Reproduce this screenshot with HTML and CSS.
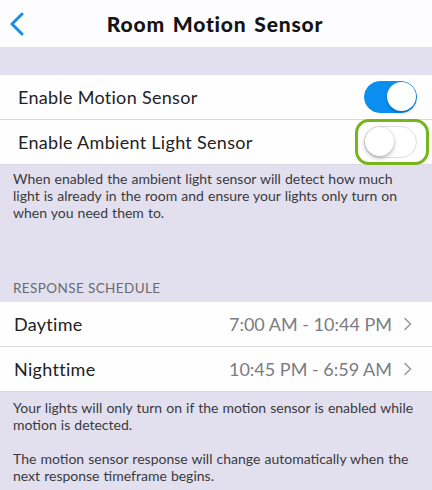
FILE: index.html
```html
<!DOCTYPE html>
<html lang="en">
<head>
<meta charset="utf-8">
<title>Room Motion Sensor</title>
<link rel="stylesheet" href="styles.css">
</head>
<body>
<div class="screen">
  <header class="nav">
    <button class="back" aria-label="Back">
      <svg width="16" height="24" viewBox="0 0 16 24"><polyline points="13,2 3,12 13,22" fill="none" stroke="#1a8fe6" stroke-width="3" stroke-linecap="round" stroke-linejoin="round"/></svg>
    </button>
    <h1 class="title">Room Motion Sensor</h1>
  </header>

  <div class="spacer"></div>

  <section class="group">
    <div class="row">
      <span class="label">Enable Motion Sensor</span>
      <span class="toggle on"><span class="knob"></span></span>
    </div>
    <div class="row">
      <span class="label">Enable Ambient Light Sensor</span>
      <span class="toggle-wrap">
        <span class="toggle"><span class="knob"></span></span>
        <span class="highlight"></span>
      </span>
    </div>
  </section>

  <p class="note first">When enabled the ambient light sensor will detect how much light is already in the room and ensure your lights only turn on when you need them to.</p>

  <h2 class="section-title">RESPONSE SCHEDULE</h2>

  <section class="group schedule">
    <div class="row">
      <span class="label">Daytime</span>
      <span class="value">7:00 AM - 10:44 PM
        <svg class="chev" width="9" height="14" viewBox="0 0 9 14"><polyline points="2,1.5 7.5,7 2,12.5" fill="none" stroke="#9a9aa0" stroke-width="1.6" stroke-linecap="round" stroke-linejoin="round"/></svg>
      </span>
    </div>
    <div class="row">
      <span class="label">Nighttime</span>
      <span class="value">10:45 PM - 6:59 AM
        <svg class="chev" width="9" height="14" viewBox="0 0 9 14"><polyline points="2,1.5 7.5,7 2,12.5" fill="none" stroke="#9a9aa0" stroke-width="1.6" stroke-linecap="round" stroke-linejoin="round"/></svg>
      </span>
    </div>
  </section>

  <div class="footer">
    <p class="note">Your lights will only turn on if the motion sensor is enabled while motion is detected.</p>
    <p class="note">The motion sensor response will change automatically when the next response timeframe begins.</p>
  </div>
</div>
</body>
</html>
```

FILE: styles.css
```css
* { box-sizing: border-box; }

html, body {
  margin: 0;
  padding: 0;
  background: #e2e0ee;
}

body {
  font-family: Lato, "Open Sans", sans-serif;
  color: #1c1c1e;
}

.screen {
  width: 432px;
  min-height: 490px;
  background: #e2e0ee;
}

.nav {
  height: 47px;
  background: #fdfcff;
  display: flex;
  align-items: center;
  justify-content: center;
  position: relative;
}

.back {
  position: absolute;
  left: 8px;
  top: 12px;
  border: 0;
  background: none;
  padding: 0;
  width: 18px;
  height: 24px;
}

.title {
  margin: 0 0 0 -2px;
  font-size: 21px;
  font-weight: 900;
  letter-spacing: 0.8px;
  word-spacing: 2px;
  color: #141416;
}

.spacer { height: 28px; }

.group {
  background: #fefeff;
}

.row {
  height: 45px;
  display: flex;
  align-items: center;
  justify-content: space-between;
  padding: 0 15px 0 18px;
  border-bottom: 1px solid #d9d8e2;
}

.schedule .row {
  padding: 0 20px 0 14px;
}

.label {
  font-size: 18px;
  letter-spacing: 0.3px;
  color: #222224;
}

.toggle {
  display: block;
  position: relative;
  width: 53px;
  height: 32px;
  border-radius: 16px;
  background: #fff;
  border: 1.5px solid #dedee2;
}

.toggle .knob {
  position: absolute;
  top: 0;
  left: 0;
  width: 29px;
  height: 29px;
  border-radius: 50%;
  background: #fff;
  box-shadow: 0 2px 4px rgba(0,0,0,0.28), 0 0 1px rgba(0,0,0,0.2);
}

.toggle.on {
  background: #0a8ff0;
  border-color: #0a8ff0;
}

.toggle.on .knob {
  left: auto;
  right: 0;
  box-shadow: 0 2px 3px rgba(0,40,80,0.35);
}

.toggle-wrap {
  position: relative;
  display: block;
}

.highlight {
  position: absolute;
  left: -9px;
  right: -12px;
  top: -7px;
  bottom: -7px;
  border: 3.5px solid #78b51b;
  border-radius: 14px;
}

.note {
  margin: 0;
  font-size: 14px;
  line-height: 17px;
  color: #3a3a3e;
  word-spacing: 0.5px;
}

.note.first {
  padding: 5px 24px 0 13px;
}

.section-title {
  margin: 59px 0 0;
  padding: 0 13px 6px;
  font-size: 13.5px;
  font-weight: 400;
  line-height: 16px;
  letter-spacing: 0.4px;
  color: #6a6a70;
}

.value {
  display: flex;
  align-items: center;
  gap: 11px;
  font-size: 18px;
  color: #7c7c82;
}

.chev { display: block; }

.footer {
  padding: 7px 6px 0 13px;
}

.footer .note + .note {
  margin-top: 17px;
}
```
